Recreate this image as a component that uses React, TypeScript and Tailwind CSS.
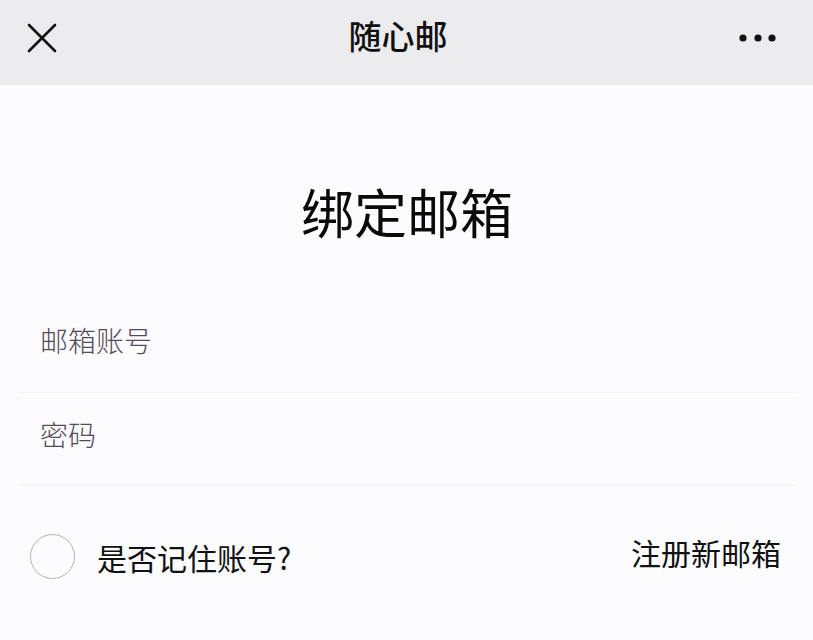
const font = { fontFamily: '"Noto Sans CJK SC", "Noto Sans", sans-serif' };

export default function App() {
  return (
    <div className="w-[813px] h-[640px] bg-[#fcfcfe] overflow-hidden" style={font}>
      <header className="h-[85px] bg-[#ececee] flex items-center justify-between px-[26px] pb-[10px]">
        <svg width="30" height="30" viewBox="0 0 30 30" className="ml-[1px]">
          <path d="M2 2 L28 28 M28 2 L2 28" stroke="#111" strokeWidth="2.6" strokeLinecap="round" />
        </svg>
        <h1 className="text-[33px] leading-none text-[#111] font-medium -mt-[4px]">随心邮</h1>
        <svg width="38" height="10" viewBox="0 0 38 10" className="mr-[10px]">
          <circle cx="4" cy="5" r="3.6" fill="#111" />
          <circle cx="19" cy="5" r="3.6" fill="#111" />
          <circle cx="33" cy="5" r="3.6" fill="#111" />
        </svg>
      </header>

      <main className="flex flex-col">
        <h2 className="text-center text-[53px] leading-none text-[#0a0a0a] mt-[100px] pl-[1px]">绑定邮箱</h2>

        <div className="mt-[62px] mx-[18px]">
          <div className="h-[93px] flex items-center px-[22px] border-b border-[#f2f2f5] pb-[12px]">
            <span className="text-[28px] text-[#56495a] font-light">邮箱账号</span>
          </div>
          <div className="h-[93px] flex items-center px-[22px] border-b border-[#f2f2f5] pt-[2px] pb-[12px]">
            <span className="text-[28px] text-[#56495a] font-light">密码</span>
          </div>
        </div>

        <div className="flex items-center justify-between mt-[48px] pl-[30px] pr-[32px]">
          <div className="flex items-center gap-[22px]">
            <div className="w-[45px] h-[45px] rounded-full border border-[#b4b4b8]" />
            <span className="text-[30px] text-[#111] leading-none">是否记住账号?</span>
          </div>
          <span className="text-[30px] text-[#111] leading-none -mt-[10px]">注册新邮箱</span>
        </div>
      </main>
    </div>
  );
}
